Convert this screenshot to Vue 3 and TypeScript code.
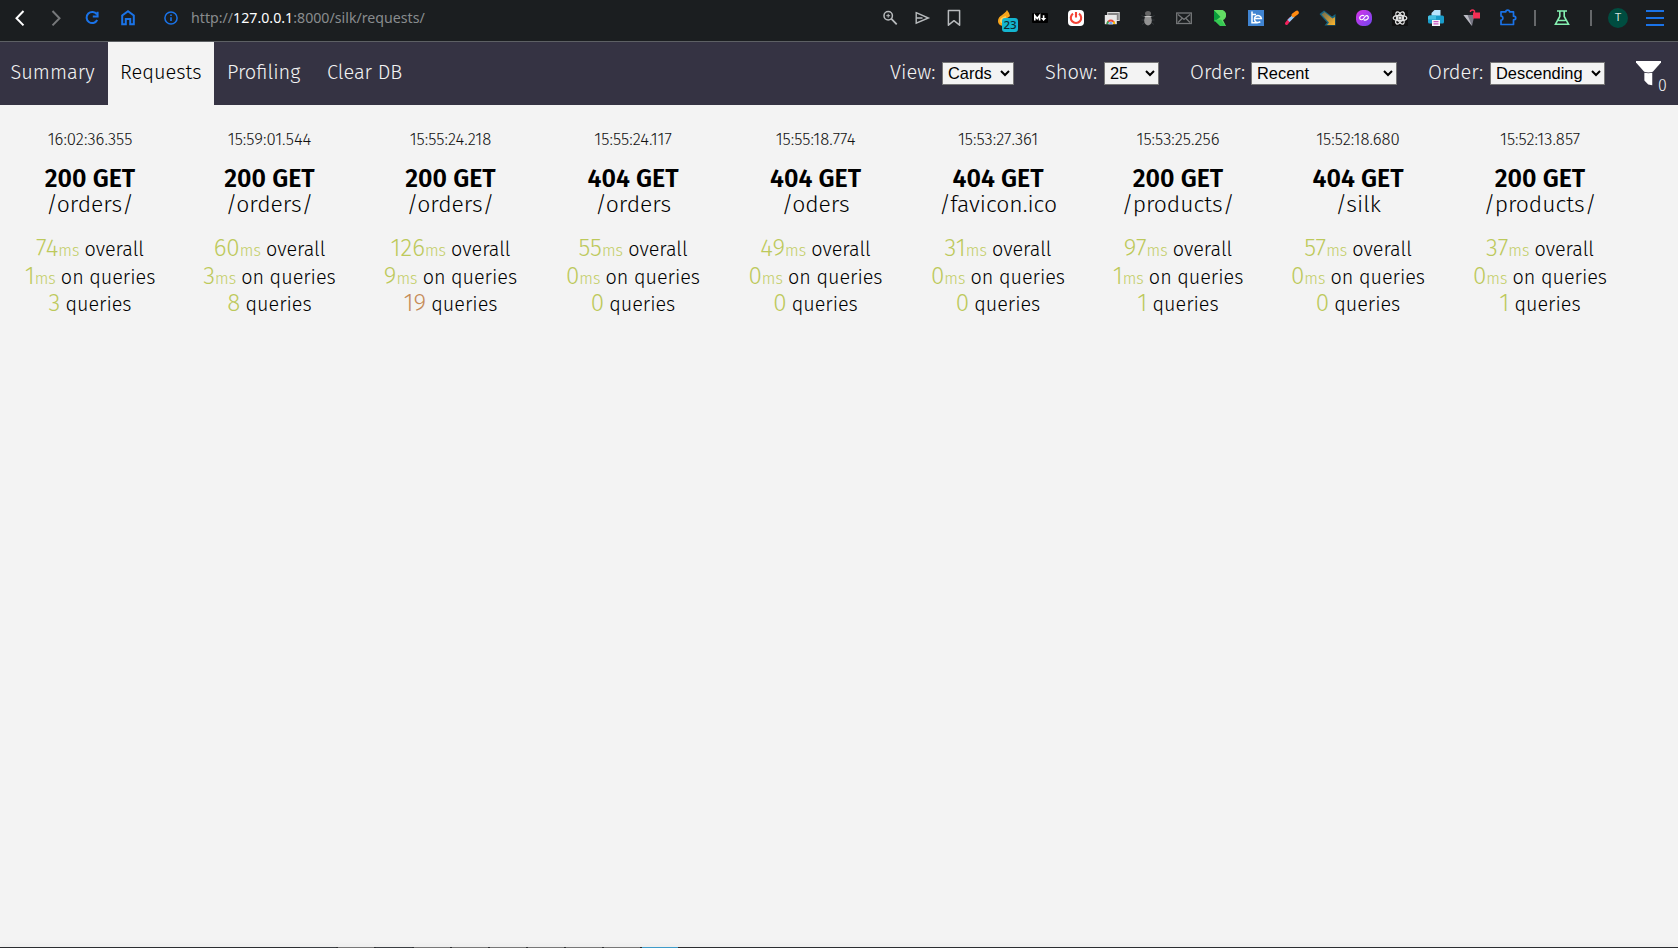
<script setup lang="ts">
interface Card {
  time: string
  status: number
  path: string
  overall: number
  onQueries: number
  queries: number
}

const tabs = [
  { id: 'summary', label: 'Summary' },
  { id: 'requests', label: 'Requests' },
  { id: 'profiling', label: 'Profiling' },
  { id: 'clear', label: 'Clear DB' },
]
const filters = [
  { id: 'view', label: 'View:', value: 'Cards' },
  { id: 'show', label: 'Show:', value: '25' },
  { id: 'order', label: 'Order:', value: 'Recent' },
  { id: 'direction', label: 'Order:', value: 'Descending' },
]
const cards: Card[] = [
  { time: '16:02:36.355', status: 200, path: '/orders/', overall: 74, onQueries: 1, queries: 3 },
  { time: '15:59:01.544', status: 200, path: '/orders/', overall: 60, onQueries: 3, queries: 8 },
  { time: '15:55:24.218', status: 200, path: '/orders/', overall: 126, onQueries: 9, queries: 19 },
  { time: '15:55:24.117', status: 404, path: '/orders', overall: 55, onQueries: 0, queries: 0 },
  { time: '15:55:18.774', status: 404, path: '/oders', overall: 49, onQueries: 0, queries: 0 },
  { time: '15:53:27.361', status: 404, path: '/favicon.ico', overall: 31, onQueries: 0, queries: 0 },
  { time: '15:53:25.256', status: 200, path: '/products/', overall: 97, onQueries: 1, queries: 1 },
  { time: '15:52:18.680', status: 404, path: '/silk', overall: 57, onQueries: 0, queries: 0 },
  { time: '15:52:13.857', status: 200, path: '/products/', overall: 37, onQueries: 0, queries: 1 },
]
const windows = ['open', 'idle', 'open', 'idle', 'idle', 'idle', 'idle', 'idle', 'idle', 'active']
</script>

<template>
  <div class="page">
    <header class="browser">
      <div class="left">
        <svg class="ic" viewBox="0 0 24 24" fill="none" stroke="#fff" stroke-width="2"><path d="M15.5 5 8.5 12.2l7 7.2" /></svg>
        <svg class="ic" viewBox="0 0 24 24" fill="none" stroke="#77797b" stroke-width="2"><path d="m8.5 5 7 7.2-7 7.2" /></svg>
        <svg class="ic" viewBox="0 0 24 24" fill="none" stroke="#1a73e8" stroke-width="2"><path d="M16.8 8.3A5.6 5.6 0 1 0 17.2 14M17.6 5.8v4.7h-4.8" /></svg>
        <svg class="ic" viewBox="0 0 24 24" fill="none" stroke="#1a73e8" stroke-width="2"><path d="M6.2 18.2V9.5L12 5.2l5.8 4.3v8.7h-3.6V13H9.8v5.2z" /></svg>
        <svg class="ic info" viewBox="0 0 24 24" fill="none" stroke="#1a73e8"><circle cx="12" cy="12" r="6.1" stroke-width="1.5" /><path d="M12 11.3V15M12 8.6v1.5" stroke-width="1.6" /></svg>
        <span class="url">http://<b>127.0.0.1</b>:8000/silk/requests/</span>
      </div>
      <div class="tools">
        <svg class="ic" viewBox="0 0 24 24" fill="none" stroke="#b8bbbd" stroke-width="1.5"><circle cx="10.2" cy="9.7" r="4.2" /><path d="m13.2 12.7 5.5 5.6" stroke-width="1.8" /><path d="M8.3 9.7h3.8M10.2 7.8v3.8" stroke-width="1" /></svg>
        <svg class="ic" viewBox="0 0 24 24" fill="none" stroke="#b8bbbd" stroke-width="1.4"><path d="m6.2 6.7 12.2 5.3-12.2 5.1zM6.5 12h6" /></svg>
        <svg class="ic" viewBox="0 0 24 24" fill="none" stroke="#b8bbbd" stroke-width="1.5"><path d="M6.4 4.5h11.2v14.7L12 14.7l-5.6 4.5z" stroke-linejoin="round" /></svg>
      </div>
      <div class="exts">
        <div class="badged">
          <svg class="ic" viewBox="0 0 24 24"><path d="M6 15C6 9.500 13 8.500 15 4l2 3 1 3c-2 2-5 2-4 5v4c-4 2-8 0-8-4z" fill="#f7a51c" /><path d="M8 15c0-3 3-4 6-5l-1 7c-2 1-5 0-5-2z" fill="#ffd15b" /></svg>
          <span class="badge">23</span>
        </div>
        <svg class="ic" viewBox="0 0 24 24"><rect x="4" y="7" width="16" height="10" rx="1" fill="#000" /><path d="M6.8 14.6v-5l2.4 3 2.4-3v5M15.600 9.300v4" stroke="#fff" stroke-width="1.6" fill="none" /><path d="M12.900 12h5.400l-2.700 3z" fill="#fff" /></svg>
        <svg class="ic" viewBox="0 0 24 24"><rect x="4" y="4" width="16" height="16" rx="4" fill="#fff" /><path d="M9 7.6a5.2 5.2 0 1 0 6 0M12 6v5.5" stroke="#f44336" stroke-width="2.1" fill="none" /></svg>
        <svg class="ic" viewBox="0 0 24 24"><rect x="7.700" y="6.500" width="11.500" height="8" fill="#858585" stroke="#d8d8d8" /><rect x="4.800" y="9" width="12" height="9.200" fill="#e9e9e9" /><path d="M6.4 18a4.4 4.4 0 0 1 8.8 0" fill="#ea4335" /><path d="M6.4 18a4.4 4.4 0 0 1 1.400-3.200l2.600 3.200z" fill="#34a853" /><path d="M15.2 18a4.4 4.4 0 0 0-1-3l-3 3z" fill="#fbbc04" /><path d="M8.600 18a2.200 2.200 0 0 1 4.400 0z" fill="#4285f4" stroke="#fff" stroke-width=".6" /></svg>
        <svg class="ic" viewBox="0 0 24 24"><path d="M5.500 9.500l3 1.500h7l3-1.500M5.500 14h13M6 18.500l3-2h6l3 2" fill="none" stroke="#33373a" /><ellipse cx="12" cy="14.5" rx="3.8" ry="5" fill="#929292" /><ellipse cx="12" cy="7.500" rx="3" ry="2.500" fill="#666" /><path d="M8.5 10.6h7" stroke="#c8c8c8" /></svg>
        <svg class="ic" viewBox="0 0 24 24" fill="none" stroke="#76787a" stroke-width="1.3"><rect x="4.7" y="7" width="14.6" height="10.5" /><path d="m6 8.5 6 5 6-5M6 16.5l4-4M18 16.5l-4-4" /></svg>
        <svg class="ic" viewBox="0 0 24 24"><path d="M6 4h7a5 5 0 0 1 5 5c0 3-1.500 4.500-3 5l3 6h-5.500L6 14z" fill="#62dc63" /><path d="M6 4l7 6.500L6 16z" fill="#089c3b" /><path d="M6 4h7a5 5 0 0 1 5 5c0 1-.4 2-.8 2.500H13z" fill="#62dc63" /><path d="M6 14l7-.5L17.500 20H12z" fill="#35c953" /></svg>
        <svg class="ic" viewBox="0 0 24 24"><rect x="4" y="4" width="16" height="16" fill="#4084d1" /><path d="M8 5.500V16.800h5.500M8 8.500h4" fill="none" stroke="#fff" stroke-width="1.500" /><path d="M10.500 12.600h6.900a3.500 3.500 0 1 0-1.100 3" fill="none" stroke="#fff" stroke-width="1.500" /></svg>
        <svg class="ic" viewBox="0 0 24 24"><path d="m6.5 17.5 4-5" stroke="#f21f5a" stroke-width="3" stroke-linecap="round" /><path d="m8.500 14.900 5-4.900" stroke="#91cbf4" stroke-width="3" /><path d="m13.5 9.200 3.400-2.500" stroke="#ff8b10" stroke-width="4" stroke-linecap="round" /></svg>
        <svg class="ic" viewBox="0 0 24 24"><defs><linearGradient id="comet" x2="1" y2="1"><stop stop-color="#6b6a50" /><stop offset="1" stop-color="#ffb52b" /></linearGradient></defs><path d="M3.500 8 8 4.500l8 6 3.500-2.500V19.500H8.500l2.500-3z" fill="#176580" /><path d="m5.500 8.500 3-2.500 8 6.500 2.500-1.500v8h-8l2-2.500z" fill="url(#comet)" /></svg>
        <svg class="ic" viewBox="0 0 24 24"><defs><linearGradient id="violet" x2="1" y2="1"><stop stop-color="#d833e8" /><stop offset="1" stop-color="#7046ef" /></linearGradient></defs><rect x="4" y="4" width="16" height="16" rx="6.5" fill="url(#violet)" /><path d="M12.200 9.800c-1.800-1-4.700.2-4.500 2.200.3 2.600 3.200 2 4.300 0s3-3.600 4.200-1.300c.9 2-1.800 3.900-4.400 3.200" fill="none" stroke="#fff" stroke-width="1.200" /></svg>
        <svg class="ic" viewBox="0 0 24 24" fill="none" stroke="#e4e4e4" stroke-width="1.3"><rect x="4" y="4" width="16" height="16" fill="#111" stroke="none" /><ellipse cx="12" cy="12" rx="6.8" ry="2.7" /><ellipse cx="12" cy="12" rx="6.8" ry="2.7" transform="rotate(60 12 12)" /><ellipse cx="12" cy="12" rx="6.8" ry="2.7" transform="rotate(120 12 12)" /><circle cx="12" cy="12" r="1.1" fill="#fff" /></svg>
        <svg class="ic" viewBox="0 0 24 24"><path d="M7.500 11V7l3-3h6v7z" fill="#b8e5fd" /><rect x="4" y="9.500" width="16" height="8" rx="1.5" fill="#199cc9" /><path d="M4 11q0-1.500 1.500-1.500H12v4H4z" fill="#46bfe0" /><path d="M8 14h8v6H8z" fill="#f4f4fa" /><path d="M9.5 15.700h5M9.5 17.900h5" stroke="#c956bf" stroke-width="1.2" /></svg>
        <svg class="ic" viewBox="0 0 24 24"><path d="M3.500 9h11L12 20z" fill="#777784" /><path d="M3.500 9h4L12 20z" fill="#bcbcc4" /><path d="M13 6.5h7v6h-7z" fill="#f52f55" /><path d="M14.5 7V5q-2-2-4 0v1" fill="none" stroke="#f52f55" stroke-width="1.4" /></svg>
        <svg class="ic" viewBox="0 0 24 24" fill="none" stroke="#1a73e8" stroke-width="1.7"><path d="M5 5.8h4.8c0-2.3 3.8-2.3 3.8 0h3.9v4.4c3 0 3 3.7 0 3.7v4.6H5v-4.3c2.5 0 2.5-4.1 0-4.1z" stroke-linejoin="round" /></svg>
      </div>
      <i class="sep first"></i>
      <svg class="ic flask" viewBox="0 0 24 24" fill="none" stroke="#85f0b1" stroke-width="1.6"><path d="M7 5h10M9.8 5v5.5L5.5 18.2h13L14.2 10.5V5M8.5 14.5h7" /></svg>
      <i class="sep second"></i>
      <span class="avatar">T</span>
      <span class="menu"><i></i><i></i><i></i></span>
    </header>

    <nav class="nav">
      <a v-for="tab in tabs" :key="tab.id" :class="['tab', tab.id]"><span>{{ tab.label }}</span></a>
      <div class="filters">
        <label v-for="f in filters" :key="f.id" :class="['filter', f.id]">
          <span>{{ f.label }}</span>
          <select><option>{{ f.value }}</option></select>
        </label>
      </div>
      <div class="funnel">
        <svg viewBox="0 0 26 26" fill="#fff"><path d="M0 0h26v1.5L17.5 11.3q-4.8 1.2-9 0L0 1.5z" /><path d="M8.7 12.2q4.2 1 8.2 0V25.3l-4.2-.8-4-4.2z" /></svg>
        <span>0</span>
      </div>
    </nav>

    <main class="cards">
      <article v-for="card in cards" :key="card.time" class="card">
        <div class="time">{{ card.time }}</div>
        <div class="status">{{ card.status }} GET</div>
        <div class="path">{{ card.path }}</div>
        <div class="metrics">
          <div class="metric"><span class="num">{{ card.overall }}</span><span class="unit">ms</span><span class="word">overall</span></div>
          <div class="metric"><span class="num">{{ card.onQueries }}</span><span class="unit">ms</span><span class="word">on queries</span></div>
          <div class="metric"><span :class="['num', { warm: card.queries > 10 }]">{{ card.queries }}</span><span class="word">queries</span></div>
        </div>
      </article>
    </main>

    <footer class="dock"><i v-for="(state, i) in windows" :key="i" :class="state"></i></footer>
  </div>
</template>

<style>
body { margin: 0; overflow: hidden; background: #f3f3f3; }
</style>

<style scoped>
.page { display: flex; flex-direction: column; width: 1678px; height: 948px; background: #f3f3f3; font-family: "Fira Sans", "Open Sans", "Noto Sans", sans-serif; font-weight: 300; color: #000; }
.ic { display: block; flex: none; width: 24px; height: 24px; }
.browser { display: flex; align-items: center; box-sizing: border-box; flex: none; height: 42px; padding-bottom: 5px; border-bottom: 1px solid #5d6064; background: #1b1e20; }
.left { display: flex; align-items: center; box-sizing: border-box; flex: none; width: 878px; padding-left: 8px; gap: 12px; }
.info { margin-left: 7px; }
.url { margin-left: -4px; font: 400 14.2px/20px "Noto Sans", sans-serif; color: #898c8e; white-space: nowrap; }
.url b { font-weight: 400; color: #fff; }
.tools { display: flex; flex: none; gap: 8px; }
.exts { display: flex; flex: none; gap: 12px; margin-left: 26px; }
.badged { position: relative; }
.badge { position: absolute; left: 10px; top: 12px; width: 16px; height: 14px; border-radius: 3px; background: #14b5cf; color: #10292e; font: 500 11.5px/14px "Noto Sans", sans-serif; text-align: center; }
.sep { flex: none; width: 2px; height: 16px; background: #66686a; }
.sep.first { margin-left: 14px; }
.flask { margin-left: 14px; }
.sep.second { margin-left: 16px; }
.avatar { flex: none; width: 20px; height: 20px; margin-left: 16px; border-radius: 50%; background: #004d40; color: #d7e1df; font: 400 11px/20px Roboto, sans-serif; text-align: center; }
.menu { display: flex; flex: none; flex-direction: column; gap: 5px; width: 18px; margin-left: 18px; }
.menu i { height: 2px; background: #1a73e8; }

.nav { display: flex; flex: none; height: 63px; background: #353343; color: #f3f3f3; font-size: 20px; line-height: 60px; white-space: nowrap; }
.tab { box-sizing: border-box; flex: none; }
.summary { width: 108px; padding-left: 10.5px; }
.requests { width: 106px; padding-left: 12px; background: #f3f3f3; color: #000; }
.profiling { width: 99px; padding-left: 13px; }
.clear { width: 100px; padding-left: 14px; }
.filters { display: flex; margin-left: 477px; }
.filter { display: flex; align-items: flex-start; justify-content: space-between; box-sizing: border-box; font-size: 20.1px; }
.filter select { box-sizing: border-box; height: 23px; margin: 20px 0 0; padding: 0 0 2px 1px; border: 1px solid #767676; border-radius: 0; background-color: #f3f3f3; color: #000; font: 400 16.4px "Liberation Sans", Arial, sans-serif; }
.view { width: 124px; } .view select { width: 72px; }
.show { width: 114px; margin-left: 31px; } .show select { width: 55px; }
.order { width: 207px; margin-left: 31px; } .order select { width: 146px; }
.direction { width: 177px; margin-left: 31px; } .direction select { width: 115px; }
.funnel { display: flex; margin-left: 31px; }
.funnel svg { width: 25px; height: 25px; margin-top: 19px; }
.funnel span { margin: 14px 0 0 -3px; font-size: 16px; }

.cards { display: grid; grid-template-columns: 180px 179px 183px 182px 183px 182px 178px 182px 182px; flex: 1; align-items: start; }
.card { display: flex; flex-direction: column; align-items: center; padding-top: 23px; white-space: nowrap; }
.time { font-size: 16.8px; line-height: 22px; color: #111; }
.status { margin-top: 16px; font-size: 25px; line-height: 26px; font-weight: 600; }
.path { font-size: 22.9px; line-height: 26px; }
.metrics { display: flex; flex-direction: column; margin-top: 16px; }
.metric { display: flex; justify-content: center; align-items: baseline; height: 27.7px; line-height: 28px; }
.num { font-size: 24.3px; color: #bdc95b; }
.num.warm { color: #c68c58; }
.unit { font-size: 16px; color: #c2cd64; }
.word { margin-left: 5.1px; font-size: 19.8px; }

.dock { display: flex; flex: none; height: 1px; background: #2b2d30; padding-left: 300px; gap: 2px; box-shadow: 0 -1px 5px rgba(0, 0, 0, 0.12); }
.dock i { width: 36px; background: #3a3d41; }
.dock .idle { background: #777; }
.dock .active { background: #3f9bc8; }
</style>
